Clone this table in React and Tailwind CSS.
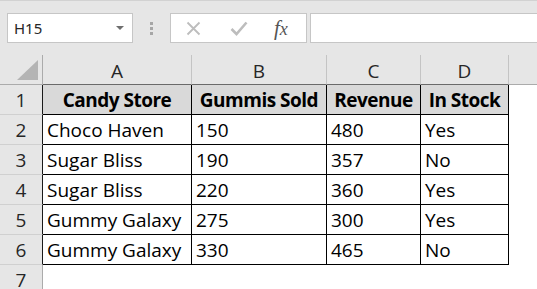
import React from "react";

const rows = [
  ["Candy Store", "Gummis Sold", "Revenue", "In Stock"],
  ["Choco Haven", "150", "480", "Yes"],
  ["Sugar Bliss", "190", "357", "No"],
  ["Sugar Bliss", "220", "360", "Yes"],
  ["Gummy Galaxy", "275", "300", "Yes"],
  ["Gummy Galaxy", "330", "465", "No"],
];

const colW = ["w-[149px]", "w-[135px]", "w-[94px]", "w-[88px]"];
const letters = ["A", "B", "C", "D"];

export default function App() {
  return (
    <div className="w-[537px] h-[289px] overflow-hidden bg-white" style={{ fontFamily: '"Open Sans", sans-serif' }}>
      {/* Formula bar */}
      <div className="h-[55px] bg-[#e6e6e6] border-t border-[#d2d2d2] flex items-start pt-[12px]">
        <div className="ml-[7px] w-[126px] h-[30px] bg-white border border-[#c6c6c6] flex items-center justify-between pl-[6px] pr-[8px]">
          <span className="text-[15px] text-[#262626]" style={{ fontFamily: '"Noto Sans", sans-serif' }}>H15</span>
          <svg width="8" height="5" viewBox="0 0 8 5"><path d="M0 0 L8 0 L4 4 Z" fill="#6e6e6e" /></svg>
        </div>
        <div className="w-[37px] h-[30px] flex flex-col items-center justify-center gap-[2px]">
          <div className="w-[3px] h-[3px] bg-[#a6a6a6]" />
          <div className="w-[3px] h-[3px] bg-[#a6a6a6]" />
          <div className="w-[3px] h-[3px] bg-[#a6a6a6]" />
        </div>
        <div className="w-[137px] h-[30px] bg-white border border-[#c6c6c6] flex items-center">
          <svg className="ml-[15px]" width="15" height="15" viewBox="0 0 15 15">
            <path d="M1.5 1.5 L13.5 13.5 M13.5 1.5 L1.5 13.5" stroke="#bdbdbd" strokeWidth="1.8" />
          </svg>
          <svg className="ml-[29px]" width="18" height="15" viewBox="0 0 18 15">
            <path d="M1.5 8 L6.5 13 L16.5 1.5" stroke="#bdbdbd" strokeWidth="2.6" fill="none" />
          </svg>
          <span className="ml-[26px] text-[21px] italic text-[#555555] leading-none" style={{ fontFamily: '"Liberation Serif", serif' }}>
            f<span className="text-[18px]">x</span>
          </span>
        </div>
        <div className="ml-[3px] flex-1 h-[30px] bg-white border border-[#c6c6c6] border-r-0" />
      </div>

      {/* Column headers */}
      <div className="flex h-[30px]">
        <div className="w-[43px] h-full bg-[#e6e6e6] border-r border-b border-[#ababab] relative">
          <svg className="absolute right-[4px] bottom-[4px]" width="21" height="20" viewBox="0 0 21 20">
            <path d="M21 0 L21 20 L0 20 Z" fill="#b4b4b4" />
          </svg>
        </div>
        {letters.map((l, i) => (
          <div key={l} className={`${colW[i]} h-full bg-[#e6e6e6] border-r border-[#c4c4c4] border-b border-b-[#6a6a6a] flex items-end justify-center pb-0 text-[19px] text-[#262626] leading-[25px]`}>
            {l}
          </div>
        ))}
        <div className="flex-1 h-full bg-[#e6e6e6] border-b border-[#ababab]" />
      </div>

      {/* Rows */}
      {rows.map((r, ri) => (
        <div key={ri} className="flex h-[30px]">
          <div className="w-[43px] h-full bg-[#e6e6e6] border-r border-r-[#1a1a1a] border-b border-b-[#d0d0d0] flex items-end justify-center pb-[1px] text-[19px] text-[#262626] leading-[26px]">
            {ri + 1}
          </div>
          {r.map((c, ci) => (
            <div
              key={ci}
              className={`${colW[ci]} h-full border-r border-b border-black flex items-end pb-[1px] text-[19px] leading-[26px] text-black whitespace-nowrap overflow-hidden ${ri === 0 ? "bg-[#d9d9d9] font-bold justify-center tracking-[-0.5px]" : "bg-white pl-[4px]"}`}
            >
              {c}
            </div>
          ))}
          <div className="flex-1 h-full bg-white" />
        </div>
      ))}
      <div className="flex h-[30px]">
        <div className="w-[43px] h-full bg-[#e6e6e6] border-r border-[#ababab] border-b border-b-[#d0d0d0] flex items-end justify-center pb-[1px] text-[19px] text-[#262626] leading-[26px]">
          7
        </div>
        <div className="flex-1 h-full bg-white" />
      </div>
    </div>
  );
}
